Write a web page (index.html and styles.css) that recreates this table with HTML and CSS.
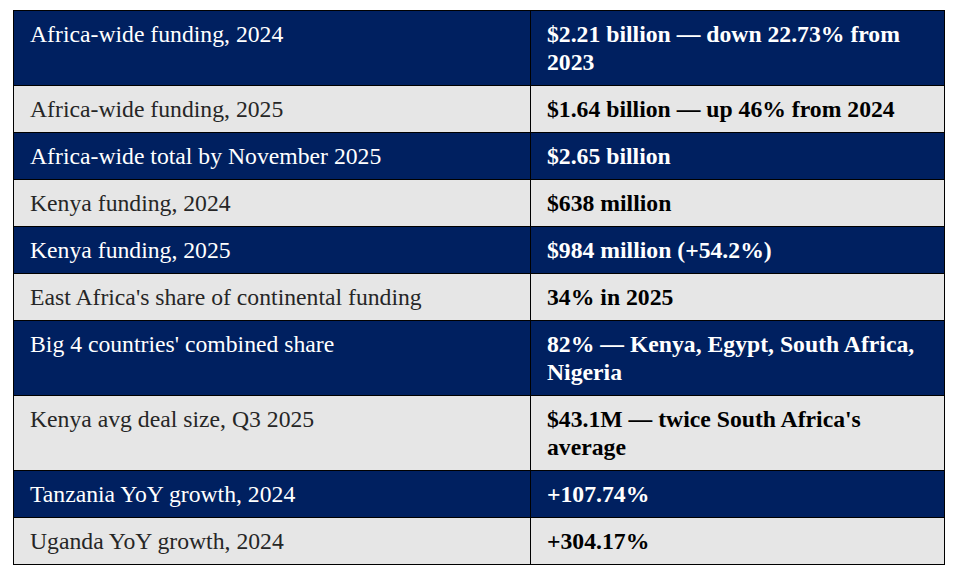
FILE: index.html
```html
<!DOCTYPE html>
<html lang="en">
<head>
<meta charset="utf-8">
<title>Africa funding</title>
<link rel="stylesheet" href="styles.css">
</head>
<body>
<div class="wrap">
<table class="data">
<colgroup><col class="c1"><col class="c2"></colgroup>
<tbody>
<tr class="dark"><td>Africa-wide funding, 2024</td><td class="val">$2.21 billion — down 22.73% from 2023</td></tr>
<tr class="light"><td>Africa-wide funding, 2025</td><td class="val">$1.64 billion — up 46% from 2024</td></tr>
<tr class="dark"><td>Africa-wide total by November 2025</td><td class="val">$2.65 billion</td></tr>
<tr class="light"><td>Kenya funding, 2024</td><td class="val">$638 million</td></tr>
<tr class="dark"><td>Kenya funding, 2025</td><td class="val">$984 million (+54.2%)</td></tr>
<tr class="light"><td>East Africa's share of continental funding</td><td class="val">34% in 2025</td></tr>
<tr class="dark"><td>Big 4 countries' combined share</td><td class="val">82% — Kenya, Egypt, South Africa, Nigeria</td></tr>
<tr class="light"><td>Kenya avg deal size, Q3 2025</td><td class="val">$43.1M — twice South Africa's average</td></tr>
<tr class="dark"><td>Tanzania YoY growth, 2024</td><td class="val">+107.74%</td></tr>
<tr class="light"><td>Uganda YoY growth, 2024</td><td class="val">+304.17%</td></tr>
</tbody>
</table>
</div>
</body>
</html>
```
FILE: styles.css
```css
html, body {
  margin: 0;
  padding: 0;
  background: #ffffff;
}
.wrap {
  padding: 10px 0 0 13px;
}
.data {
  border-collapse: collapse;
  table-layout: fixed;
  width: 931px;
  font-family: "Liberation Serif", "Times New Roman", serif;
  font-size: 23.7px;
  line-height: 28px;
}
.c1 { width: 517px; }
.c2 { width: 414px; }
.data td {
  border: 1px solid #000000;
  padding: 9px 15px 9px 16px;
  vertical-align: top;
}
.data td.val {
  font-weight: bold;
}
.dark td {
  background: #002060;
  color: #ffffff;
}
.light td {
  background: #e6e6e6;
  color: #262626;
}
.light td.val {
  color: #000000;
}
```
